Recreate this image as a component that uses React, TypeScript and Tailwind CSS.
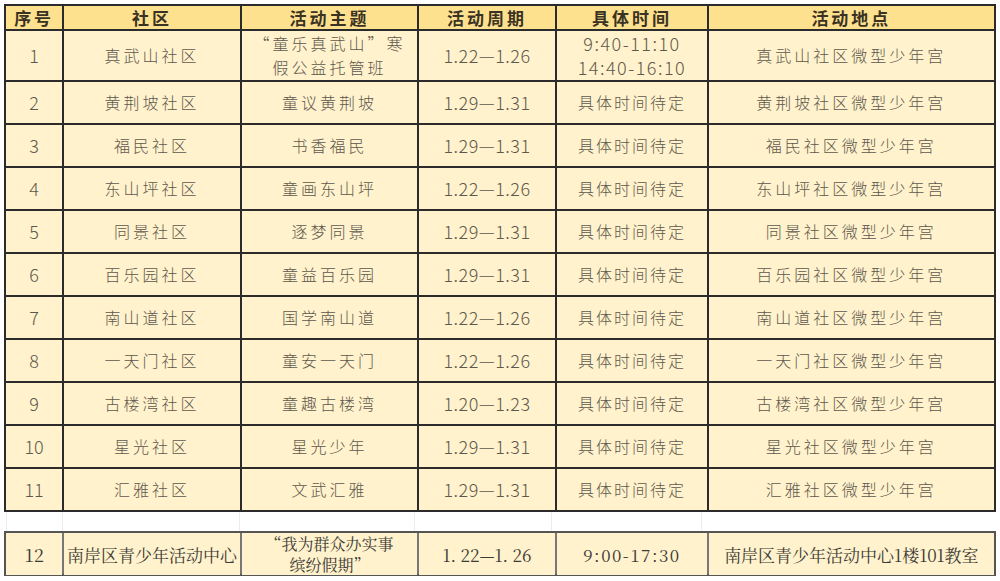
import React from 'react';

type Row = {
  no: string;
  community: string;
  theme: string[];
  period: string;
  time: string[];
  place: string;
};

const rows: Row[] = [
  { no: '1', community: '真武山社区', theme: ['“童乐真武山”寒', '假公益托管班'], period: '1.22—1.26', time: ['9:40-11:10', '14:40-16:10'], place: '真武山社区微型少年宫' },
  { no: '2', community: '黄荆坡社区', theme: ['童议黄荆坡'], period: '1.29—1.31', time: ['具体时间待定'], place: '黄荆坡社区微型少年宫' },
  { no: '3', community: '福民社区', theme: ['书香福民'], period: '1.29—1.31', time: ['具体时间待定'], place: '福民社区微型少年宫' },
  { no: '4', community: '东山坪社区', theme: ['童画东山坪'], period: '1.22—1.26', time: ['具体时间待定'], place: '东山坪社区微型少年宫' },
  { no: '5', community: '同景社区', theme: ['逐梦同景'], period: '1.29—1.31', time: ['具体时间待定'], place: '同景社区微型少年宫' },
  { no: '6', community: '百乐园社区', theme: ['童益百乐园'], period: '1.29—1.31', time: ['具体时间待定'], place: '百乐园社区微型少年宫' },
  { no: '7', community: '南山道社区', theme: ['国学南山道'], period: '1.22—1.26', time: ['具体时间待定'], place: '南山道社区微型少年宫' },
  { no: '8', community: '一天门社区', theme: ['童安一天门'], period: '1.22—1.26', time: ['具体时间待定'], place: '一天门社区微型少年宫' },
  { no: '9', community: '古楼湾社区', theme: ['童趣古楼湾'], period: '1.20—1.23', time: ['具体时间待定'], place: '古楼湾社区微型少年宫' },
  { no: '10', community: '星光社区', theme: ['星光少年'], period: '1.29—1.31', time: ['具体时间待定'], place: '星光社区微型少年宫' },
  { no: '11', community: '汇雅社区', theme: ['文武汇雅'], period: '1.29—1.31', time: ['具体时间待定'], place: '汇雅社区微型少年宫' },
];

// column lines sit at x = 63, 241, 418, 556, 708 in the screenshot
const cols = 'grid grid-cols-[56.25px_176.5px_175.5px_136.5px_150.5px_1fr]';
const sans = { fontFamily: '"Noto Sans CJK SC", "Noto Sans", sans-serif' };
const serif = { fontFamily: '"Noto Serif CJK SC", "Liberation Serif", "Noto Sans CJK SC", serif' };

const headers = ['序号', '社区', '活动主题', '活动周期', '具体时间', '活动地点'];

export default function App() {
  return (
    <div className="h-[581px] w-[1000px] overflow-hidden bg-white pl-[4px] pt-[4px]" style={sans}>
      <div className="w-[992px] border-2 border-[#2b2b2b] bg-[#2b2b2b]">
        <div className={`${cols} h-[23px] gap-x-[1.5px] bg-[#2b2b2b]`}>
          {headers.map((h) => (
            <div key={h} className="flex items-center justify-center bg-[#fee18f] text-[17px] font-bold leading-none tracking-[3px] text-[#3a3222]">
              {h}
            </div>
          ))}
        </div>
        {rows.map((r, i) => (
          <div
            key={r.no}
            className={`${cols} mt-[1.5px] gap-x-[1.5px] text-[16px] font-light leading-[24px] text-[#5e584c] ${i === 0 ? 'h-[49.5px]' : 'h-[41.5px]'}`}
          >
            <div className="flex items-center justify-center bg-[#fff2cc] text-[18px]">{r.no}</div>
            <div className="flex items-center justify-center bg-[#fff2cc] tracking-[3px]">{r.community}</div>
            <div className="flex flex-col items-center justify-center bg-[#fff2cc] tracking-[3px]">
              {r.theme.map((t) => (
                <span key={t}>{t}</span>
              ))}
            </div>
            <div className="flex items-center justify-center bg-[#fff2cc] text-[18px] tracking-[0.5px]">{r.period}</div>
            <div className="flex flex-col items-center justify-center bg-[#fff2cc] tracking-[2px]">
              {r.time.map((t) => (
                <span key={t} className={t.includes(':') ? 'text-[18px] tracking-[1.5px]' : ''}>
                  {t}
                </span>
              ))}
            </div>
            <div className="flex items-center justify-center bg-[#fff2cc] tracking-[3px]">{r.place}</div>
          </div>
        ))}
      </div>
      <div className={`${cols} h-[19px] w-[992px] pl-[2px]`}>
        {headers.map((h) => (
          <div key={h} className="border-l border-[#ececec]" />
        ))}
      </div>
      <div className={`${cols} h-[45px] w-[992px] gap-x-[1.5px] border-2 border-[#555] bg-[#777] text-[16px] leading-[21px] text-[#3c3a36]`} style={serif}>
        <div className="flex items-center justify-center bg-[#fff2cc] text-[18px]">12</div>
        <div className="flex items-center justify-center whitespace-nowrap bg-[#fff2cc] text-[17px]">南岸区青少年活动中心</div>
        <div className="flex flex-col items-center justify-center bg-[#fff2cc] text-[16px]">
          <span>“我为群众办实事</span>
          <span>缤纷假期”</span>
        </div>
        <div className="flex items-center justify-center bg-[#fff2cc] text-[17px]">1. 22—1. 26</div>
        <div className="flex items-center justify-center bg-[#fff2cc] text-[17px] tracking-[1.5px]">9:00-17:30</div>
        <div className="flex items-center justify-center whitespace-nowrap bg-[#fff2cc] text-[17px]">南岸区青少年活动中心1楼101教室</div>
      </div>
    </div>
  );
}
